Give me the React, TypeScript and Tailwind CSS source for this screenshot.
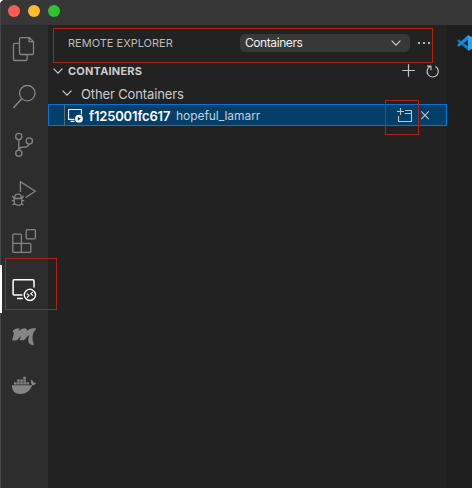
import type { ReactNode } from "react";

function ActivityItem({ y, active, label, children }: { y: number; active?: boolean; label: string; children: ReactNode }) {
  return (
    <button
      aria-label={label}
      className={`block h-12 w-12 ${active ? "bg-[linear-gradient(to_right,#fff_2px,transparent_2px)] text-white" : "text-[#858585]"}`}
    >
      <svg width="48" height="48" viewBox={`0 ${y} 48 48`} fill="none" stroke="currentColor" strokeWidth="1.3">
        {children}
      </svg>
    </button>
  );
}

function Chevron({ className }: { className: string }) {
  return (
    <svg className={className} width="10" height="6" viewBox="0 0 10 6" fill="none" stroke="currentColor" strokeWidth="1.2">
      <path d="M.6.7 5 5.1 9.4.7" />
    </svg>
  );
}

function ActivityBar() {
  return (
    <nav className="w-12 shrink-0 border-l border-[#454545] bg-[#2d2d2d]">
      <div className="-ml-px">
        <ActivityItem y={25} label="Explorer">
          <path d="M19.5 43.3h-4.7q-1.3 0-1.3 1.3v14.6q0 1.3 1.3 1.3h11q1.3 0 1.3-1.3v-4.4" />
          <path d="M29.4 37.6h-8.6q-1.3 0-1.3 1.3v14.3q0 1.3 1.3 1.3h11.4q1.3 0 1.3-1.3V41.7zM29 37.6v4.1h4.5" />
        </ActivityItem>
        <ActivityItem y={73} label="Search">
          <circle cx="27.3" cy="93.2" r="7.7" />
          <path d="M21.7 98.8 13.4 108" strokeWidth="1.6" />
        </ActivityItem>
        <ActivityItem y={121} label="Source Control">
          <circle cx="18.8" cy="136.5" r="3.1" />
          <circle cx="29.3" cy="141" r="3.1" />
          <circle cx="18.8" cy="153.2" r="3.1" />
          <path d="M18.8 139.6v10.5M29 144.2c-.5 2-1.8 2.9-4 2.9h-2.2c-2.2 0-3.5 1-4 3" />
        </ActivityItem>
        <ActivityItem y={169} label="Run and Debug">
          <path d="M20.4 192v-10.3L35.3 191.2 25.7 197.5" />
          <path d="M14.2 198.5h7.6v3.4c0 2.1-1.6 3.3-3.8 3.3s-3.8-1.2-3.8-3.3zM14.8 198.5v-1.2c0-2 1.4-3.1 3.2-3.1s3.2 1.1 3.2 3.1v1.2M14.2 198.5l-1.8-2.5M21.8 198.5l1.8-2.5M14.2 200.6h-2.4M21.8 200.6h2.4M14.8 203l-2.2 2.1M21.2 203l2.2 2.1" strokeWidth="1.3" />
        </ActivityItem>
        <ActivityItem y={217} label="Extensions">
          <path d="M21.4 243.3v-8.1q0-1-1-1h-6.6q-1 0-1 1v16.2q0 1 1 1h16q1 0 1-1v-7.1q0-1-1-1h-17M21.4 243.3v9.1" />
          <rect x="26.2" y="229.6" width="9.2" height="9.2" rx="1" />
        </ActivityItem>
        <ActivityItem y={265} label="Remote Explorer" active>
          <path d="M22.5 294.9h-8.4q-1 0-1-1v-12.9q0-1.2 1-1.2h18.8q1.1 0 1.1 1.2v6.4M17 298.4h5.8" strokeWidth="1.5" />
          <circle cx="29.9" cy="294.9" r="5.6" strokeWidth="1.4" />
          <path d="m26.9 293.7 2.1 1.9-2.1 2M32.9 291.8l-2.1 1.9 2.1 2" strokeWidth="1.1" />
        </ActivityItem>
        <ActivityItem y={313} label="Script M">
          <path
            d="M12.6 331.2c1-2 3.4-3 6.9-3l-.7 3c1.8-2 3.6-3 5.7-3 2.2 0 2.8 1.1 2.2 2.9 2.2-2 4.4-2.9 6.4-2.9h2.9l-.6 2c-1.7 1-2.4 3.2-2.7 5.4-.4 3.3-.2 6 1.6 9.2-3.6.6-6-1.1-6.1-4.4 0-1.8.4-3.5 1.2-5.3-1.9 1.4-3.6 3-5.2 5.1h-4.9l2-4.2c-1.7 1.2-3.2 2.8-4.5 4.4h-4.7l1.9-7.4z"
            fill="currentColor"
            stroke="none"
          />
        </ActivityItem>
        <ActivityItem y={361} label="Docker">
          <g fill="currentColor" stroke="none">
            <path d="M12 385.2h18.7c.7-.1 1.1-.4 1.4-.7-1.6-1.5-1.5-3.4-.5-5 1.1.8 1.7 1.9 1.7 3 1-.2 1.8 0 2.7.5-.6 1.5-1.9 2.3-3.8 2.2-2.1 5.7-6.2 8.7-12 8.7-5.4 0-8.3-3-8.2-8.7z" />
            <path d="M14 382.3h2.6v2.3H14zM17.1 382.3h2.6v2.3h-2.6zM20.2 382.3h2.6v2.3h-2.6zM23.3 382.3h2.6v2.3h-2.6zM26.4 382.3H29v2.3h-2.6zM17.1 379.5h2.6v2.3h-2.6zM20.2 379.5h2.6v2.3h-2.6zM23.3 379.5h2.6v2.3h-2.6zM23.3 376.7h2.6v2.3h-2.6z" />
          </g>
        </ActivityItem>
      </div>
    </nav>
  );
}

function Sidebar() {
  return (
    <aside className="w-[399px] shrink-0 bg-[#222222] text-[#cccccc]">
      <header className="flex h-[35px] items-center pl-5 pt-px">
        <h1 className="w-[172px] whitespace-nowrap text-[11px] leading-4 text-[#bbbbbb]">REMOTE EXPLORER</h1>
        <button className="flex h-[18px] w-[170px] items-center justify-between rounded-[5px] bg-[#383838] pl-[5px] pr-[9px] text-[12px] leading-[18px] tracking-[-0.035em] text-[#f0f0f0]">
          Containers
          <Chevron className="text-[#cccccc]" />
        </button>
        <span className="ml-2 flex gap-[3px]">
          <i className="size-[2px] bg-[#b5b5b5]" />
          <i className="size-[2px] bg-[#b5b5b5]" />
          <i className="size-[2px] bg-[#b5b5b5]" />
        </span>
      </header>
      <div className="flex h-[22px] items-center pl-[5px]">
        <Chevron className="" />
        <h2 className="ml-[5px] text-[11px] font-bold leading-4 tracking-[0.018em]">CONTAINERS</h2>
        <svg className="ml-auto mr-[5px]" width="40" height="16" viewBox="402 63 40 16" fill="none" stroke="#c5c5c5" strokeWidth="1.2">
          <path d="M402.2 70.5h12.6M408.5 64.2v12.6" />
          <path d="M430.4 66.3a5.6 5.6 0 1 0 5 .2M427 66.2h3.9v4" />
        </svg>
      </div>
      <div className="flex h-[22px] items-center pl-3.5 text-[13px]">
        <Chevron className="" />
        <span className="ml-[9px] whitespace-nowrap pt-px leading-5 tracking-[-0.01em]">Other Containers</span>
      </div>
      <div className="flex h-[22px] items-center border border-[#0a72d2] bg-[#033f69] text-white">
        <span className="ml-[15px] h-5 w-px bg-[#6a6764]" />
        <svg className="ml-[3px]" width="16" height="16" viewBox="68 107 16 16" fill="none" stroke="#f0f0f0" strokeWidth="1.1">
          <path d="M74.5 119.4h-5.9v-9.9h12.8v5M70.5 121.4h4" />
          <circle cx="79" cy="118.7" r="3.9" fill="#fff" stroke="none" />
          <path d="m77.8 116.7 3 2-3 2z" fill="#033f69" stroke="none" />
        </svg>
        <span className="ml-[5px] w-[87px] whitespace-nowrap pt-px text-[13px] font-semibold leading-[18px] tracking-[-0.012em]">f125001fc617</span>
        <span className="whitespace-nowrap pt-[2px] text-[12px] leading-[18px] tracking-[-0.005em] text-[#c4d2dc]">hopeful_lamarr</span>
        <svg className="ml-auto mr-[15px]" width="34" height="18" viewBox="397 106 34 18" fill="none" stroke="#c5c5c5" strokeWidth="1.1">
          <path d="M397 111.5h7M400.5 108v7M398.5 116v5.5h13v-11h-6.3M404.8 113.5h6.7" />
          <path d="m421.2 111.3 7.6 7.8M428.8 111.3l-7.6 7.8" />
        </svg>
      </div>
    </aside>
  );
}

export default function App() {
  return (
    <div className="relative flex h-[488px] w-[472px] flex-col overflow-hidden rounded-tl-[5px] bg-[#1e1e1e] font-['Inter','Liberation_Sans',sans-serif]">
      <header className="flex h-[25px] shrink-0 items-start gap-2 border-l border-[#454545] bg-[#373737] pl-[7px] pt-[5px]">
        <span className="size-3 rounded-full bg-[#fe5a54]" />
        <span className="size-3 rounded-full bg-[#febb2d]" />
        <span className="size-3 rounded-full bg-[#2fc334]" />
      </header>
      <div className="flex min-h-0 flex-1">
        <ActivityBar />
        <Sidebar />
        <main className="w-[25px] overflow-hidden bg-[#1e1e1e] pl-[9px] pt-[10px]">
          <svg width="16" height="16" viewBox="0 0 16 16">
            <path d="M1 6 2.8 4.3 13 12v3.6L11.5 15z" fill="#0d78c3" />
            <path d="M11.5.6 13 .2V4L2.8 11.7 1 10z" fill="#158bda" />
            <path d="M12 .3 16 2v12l-4 1.8z" fill="#2da3f2" />
          </svg>
        </main>
      </div>
      <div className="pointer-events-none absolute left-[53px] top-[28px] h-[35px] w-[380px] border border-[#b52010]" />
      <div className="pointer-events-none absolute left-[385px] top-[100px] h-[35px] w-[34px] border border-[#b52010]" />
      <div className="pointer-events-none absolute left-[5px] top-[258px] h-[52px] w-[52px] border border-[#b52010]" />
    </div>
  );
}
